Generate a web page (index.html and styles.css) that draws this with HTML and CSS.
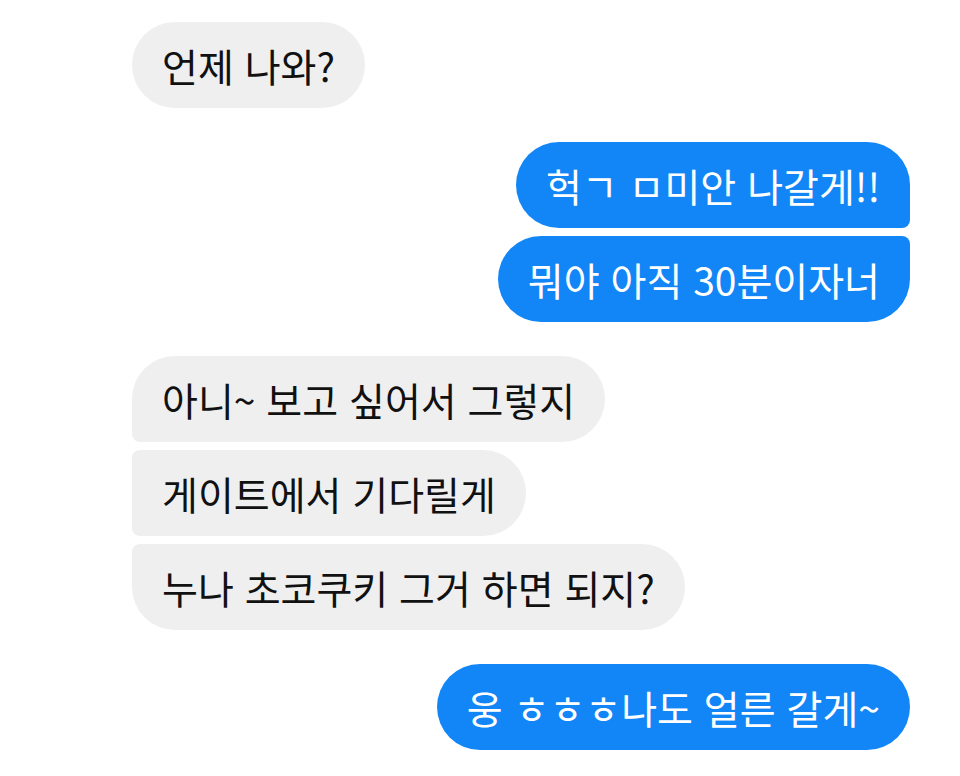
FILE: index.html
```html
<!doctype html>
<html lang="ko">
	<head>
		<meta charset="UTF-8">
		<title>Chat</title>
		<link rel="stylesheet" href="styles.css">
	</head>

	<body>
		<div class="chat">
			<div class="group them">
				<div class="bubble">언제 나와?</div>
			</div>

			<div class="group me">
				<div class="bubble">헉ㄱ ㅁ미안 나갈게!!</div>
				<div class="bubble">뭐야 아직 30분이자너</div>
			</div>

			<div class="group them">
				<div class="bubble">아니~ 보고 싶어서 그렇지</div>
				<div class="bubble">게이트에서 기다릴게</div>
				<div class="bubble">누나 초코쿠키 그거 하면 되지?</div>
			</div>

			<div class="group me">
				<div class="bubble">웅 ㅎㅎㅎ나도 얼른 갈게~</div>
			</div>
		</div>
	</body>
</html>
```

FILE: styles.css
```css
* {
	padding: 0;
	margin: 0;
	box-sizing: border-box;
}
body {
	background-color: #fff;
	color: #111;
	font-family: "Noto Sans CJK KR", "Noto Sans", sans-serif;
	font-size: 39px;
}
.chat {
	display: flex;
	flex-direction: column;
	gap: 34px;
	padding: 22px 50px 0 132px;
}
.group {
	display: flex;
	flex-direction: column;
	gap: 8px;
}
.them {
	align-items: flex-start;
}
.me {
	align-items: flex-end;
}
.bubble {
	line-height: 44px;
	padding: 21px 30px;
	border-radius: 43px;
	white-space: nowrap;
}
.them .bubble {
	background-color: #efefef;
	color: #111;
}
.me .bubble {
	background-color: #1286f7;
	color: #fff;
}

/* grouped corners */
.them .bubble:not(:last-child) {
	border-bottom-left-radius: 8px;
}
.them .bubble:not(:first-child) {
	border-top-left-radius: 8px;
}
.me .bubble:not(:last-child) {
	border-bottom-right-radius: 8px;
}
.me .bubble:not(:first-child) {
	border-top-right-radius: 8px;
}
```
